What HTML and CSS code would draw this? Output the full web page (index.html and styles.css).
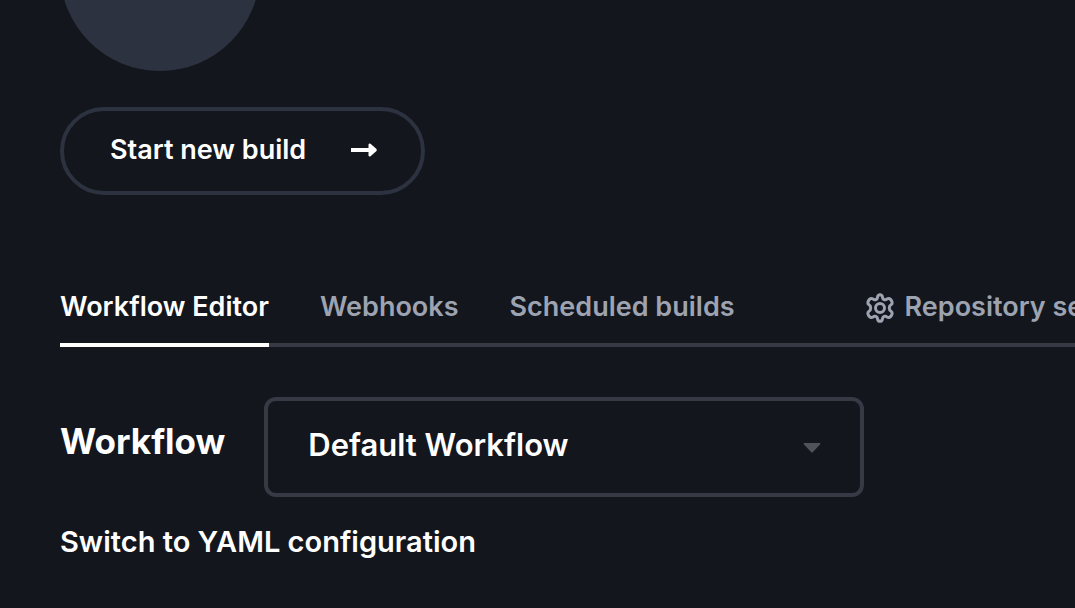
FILE: index.html
```html
<!DOCTYPE html>
<html lang="en">
<head>
<meta charset="utf-8">
<meta name="viewport" content="width=device-width, initial-scale=1">
<title>Workflow Editor</title>
<link rel="stylesheet" href="styles.css">
</head>
<body>
<main class="page">
  <div class="avatar"></div>
  <button class="build-button" type="button">
    Start new build
    <svg class="arrow" viewBox="0 0 26 14" aria-hidden="true"><path d="M0 5H17.500V1.500Q18 0 19.500 .8L25.500 6Q26 7 25.500 8L19.500 13.200Q18 14 17.500 12.500V9H0Z"/></svg>
  </button>
  <nav class="tabs">
    <a class="tab tab-active" href="#editor">Workflow Editor</a>
    <a class="tab" href="#webhooks">Webhooks</a>
    <a class="tab" href="#scheduled">Scheduled builds</a>
    <a class="tab tab-settings" href="#settings">
      <svg class="gear" viewBox="0 0 30 30" aria-hidden="true"><path d="M12.600 4Q12.900 1.700 15 1.700T17.400 4C17.700 6.500 20 7.500 22 6.100C23.700 5 25.300 5.800 26.300 7.400S27.700 10.800 26 11.800C23.700 13.200 23.700 16.800 26 18.200C27.700 19.200 27.300 21 26.300 22.600S23.700 25 22 23.900C20 22.500 17.700 23.500 17.400 26Q17.100 28.300 15 28.300T12.600 26C12.300 23.500 10 22.500 8 23.900C6.300 25 4.700 24.200 3.700 22.600S2.300 19.200 4 18.200C6.300 16.800 6.300 13.200 4 11.800C2.300 10.800 2.700 9 3.700 7.400S6.300 5 8 6.100C10 7.500 12.300 6.500 12.600 4Z"/><circle cx="15" cy="15" r="4.500"/></svg>
      Repository settings
    </a>
  </nav>
  <div class="workflow-row">
    <label class="workflow-label" for="workflow">Workflow</label>
    <div class="select-box">
      <select class="select" id="workflow"><option>Default Workflow</option></select>
      <svg class="caret" viewBox="0 0 18 10" aria-hidden="true"><path d="M1 0H17Q18 .5 17 1.500L10 9Q9 10 8 9L1 1.500Q0 .5 1 0Z"/></svg>
    </div>
  </div>
  <a class="yaml-link" href="#yaml">Switch to YAML configuration</a>
</main>
</body>
</html>
```
FILE: styles.css
```css
* {
  box-sizing: border-box;
}

body {
  margin: 0;
  overflow: hidden;
  background: #13161d;
  color: #fff;
  font: 600 27px/36px Inter, "Liberation Sans", sans-serif;
}

a {
  color: inherit;
  text-decoration: none;
}

.page {
  display: flex;
  flex-direction: column;
  align-items: flex-start;
  padding-left: 60px;
}

.avatar {
  width: 200px;
  height: 200px;
  margin-top: -129px;
  border-radius: 50%;
  background: #2c323f;
}

.build-button {
  display: flex;
  align-items: center;
  gap: 45px;
  margin-top: 36px;
  padding: 21px 44px 23px 46px;
  border: 4px solid #2c323f;
  border-radius: 44px;
  background: none;
  color: inherit;
  font: inherit;
  white-space: nowrap;
}

.arrow {
  width: 26px;
  height: 14px;
  fill: currentColor;
}

.tabs {
  display: flex;
  align-self: stretch;
  gap: 51px;
  margin-top: 94px;
  box-shadow: inset 0 -4px #373945;
  color: #9da3b0;
  white-space: nowrap;
}

.tab {
  flex: none;
  padding-bottom: 22px;
}

.tab-active {
  padding-bottom: 18px;
  border-bottom: 4px solid #fff;
  color: #fff;
}

.tab-settings {
  display: flex;
  align-items: flex-start;
  gap: 10px;
  margin-left: 79px;
}

.gear {
  width: 30px;
  height: 30px;
  margin-top: 4px;
  fill: none;
  stroke: currentColor;
  stroke-width: 3;
}

.workflow-row {
  display: flex;
  align-items: center;
  align-self: stretch;
  gap: 39px;
  margin-top: 50px;
}

.workflow-label {
  padding-bottom: 12px;
  font-size: 35px;
  font-weight: 700;
}

.select-box {
  position: relative;
  width: 600px;
}

.select {
  width: 100%;
  padding: 26px 40px 30px;
  appearance: none;
  border: 4px solid #373945;
  border-radius: 12px;
  background: none;
  color: inherit;
  font: inherit;
  font-size: 31px;
}

.caret {
  position: absolute;
  top: 46px;
  right: 43px;
  width: 18px;
  height: 10px;
  fill: #4f535a;
  pointer-events: none;
}

.yaml-link {
  margin-top: 27px;
  font-size: 29px;
}
```
